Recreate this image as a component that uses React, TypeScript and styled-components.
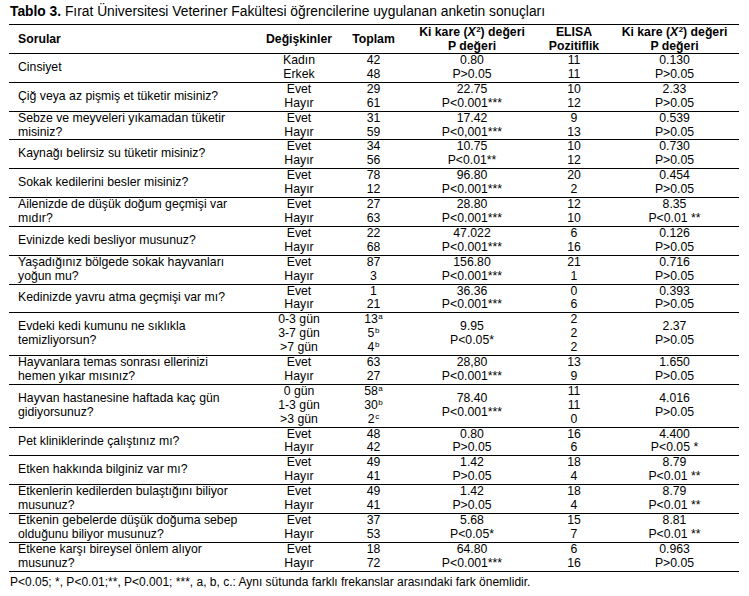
import { FC, ReactNode } from "react";
import styled, { createGlobalStyle } from "styled-components";

interface GroupType {
	q: string;
	vars: string[];
	totals: [string, string?][];
	chi: [string, string];
	elisa: string[];
	chi2: [string, string];
}

const yn = ["Evet", "Hayır"];

const groups: GroupType[] = [
	{ q: "Cinsiyet", vars: ["Kadın", "Erkek"], totals: [["42"], ["48"]], chi: ["0.80", "P>0.05"], elisa: ["11", "11"], chi2: ["0.130", "P>0.05"] },
	{ q: "Çiğ veya az pişmiş et tüketir misiniz?", vars: yn, totals: [["29"], ["61"]], chi: ["22.75", "P<0.001***"], elisa: ["10", "12"], chi2: ["2.33", "P>0.05"] },
	{ q: "Sebze ve meyveleri yıkamadan tüketir misiniz?", vars: yn, totals: [["31"], ["59"]], chi: ["17.42", "P<0,001***"], elisa: ["9", "13"], chi2: ["0.539", "P>0.05"] },
	{ q: "Kaynağı belirsiz su tüketir misiniz?", vars: yn, totals: [["34"], ["56"]], chi: ["10.75", "P<0.01**"], elisa: ["10", "12"], chi2: ["0.730", "P>0.05"] },
	{ q: "Sokak kedilerini besler misiniz?", vars: yn, totals: [["78"], ["12"]], chi: ["96.80", "P<0.001***"], elisa: ["20", "2"], chi2: ["0.454", "P>0.05"] },
	{ q: "Ailenizde de düşük doğum geçmişi var mıdır?", vars: yn, totals: [["27"], ["63"]], chi: ["28.80", "P<0.001***"], elisa: ["12", "10"], chi2: ["8.35", "P<0.01 **"] },
	{ q: "Evinizde kedi besliyor musunuz?", vars: yn, totals: [["22"], ["68"]], chi: ["47.022", "P<0.001***"], elisa: ["6", "16"], chi2: ["0.126", "P>0.05"] },
	{ q: "Yaşadığınız bölgede sokak hayvanları yoğun mu?", vars: yn, totals: [["87"], ["3"]], chi: ["156.80", "P<0.001***"], elisa: ["21", "1"], chi2: ["0.716", "P>0.05"] },
	{ q: "Kedinizde yavru atma geçmişi var mı?", vars: yn, totals: [["1"], ["21"]], chi: ["36.36", "P<0.001***"], elisa: ["0", "6"], chi2: ["0.393", "P>0.05"] },
	{ q: "Evdeki kedi kumunu ne sıklıkla temizliyorsun?", vars: ["0-3 gün", "3-7 gün", ">7 gün"], totals: [["13", "a"], ["5", "b"], ["4", "b"]], chi: ["9.95", "P<0.05*"], elisa: ["2", "2", "2"], chi2: ["2.37", "P>0.05"] },
	{ q: "Hayvanlara temas sonrası ellerinizi hemen yıkar mısınız?", vars: yn, totals: [["63"], ["27"]], chi: ["28,80", "P<0.001***"], elisa: ["13", "9"], chi2: ["1.650", "P>0.05"] },
	{ q: "Hayvan hastanesine haftada kaç gün gidiyorsunuz?", vars: ["0 gün", "1-3 gün", ">3 gün"], totals: [["58", "a"], ["30", "b"], ["2", "c"]], chi: ["78.40", "P<0.001***"], elisa: ["11", "11", "0"], chi2: ["4.016", "P>0.05"] },
	{ q: "Pet kliniklerinde çalıştınız mı?", vars: yn, totals: [["48"], ["42"]], chi: ["0.80", "P>0.05"], elisa: ["16", "6"], chi2: ["4.400", "P<0.05 *"] },
	{ q: "Etken hakkında bilginiz var mı?", vars: yn, totals: [["49"], ["41"]], chi: ["1.42", "P>0.05"], elisa: ["18", "4"], chi2: ["8.79", "P<0.01 **"] },
	{ q: "Etkenlerin kedilerden bulaştığını biliyor musunuz?", vars: yn, totals: [["49"], ["41"]], chi: ["1.42", "P>0.05"], elisa: ["18", "4"], chi2: ["8.79", "P<0.01 **"] },
	{ q: "Etkenin gebelerde düşük doğuma sebep olduğunu biliyor musunuz?", vars: yn, totals: [["37"], ["53"]], chi: ["5.68", "P<0.05*"], elisa: ["15", "7"], chi2: ["8.81", "P<0.01 **"] },
	{ q: "Etkene karşı bireysel önlem alıyor musunuz?", vars: yn, totals: [["18"], ["72"]], chi: ["64.80", "P<0.001***"], elisa: ["6", "16"], chi2: ["0.963", "P>0.05"] },
];

const ChiHead: FC = () => (
	<>
		Ki kare (<i>X</i>
		<Sup>2</Sup>) değeri
	</>
);

export default function App() {
	return (
		<>
			<GlobalStyle />
			<Page>
				<Title>
					<b>Tablo 3.</b> Fırat Üniversitesi Veteriner Fakültesi öğrencilerine uygulanan anketin sonuçları
				</Title>
				<Table>
					<HeadRow>
						<Cell $left>Sorular</Cell>
						<Cell>Değişkinler</Cell>
						<Cell>Toplam</Cell>
						<Cell>
							<Line>
								<ChiHead />
							</Line>
							<Line>P değeri</Line>
						</Cell>
						<Cell>
							<Line>ELISA</Line>
							<Line>Pozitiflik</Line>
						</Cell>
						<Cell>
							<Line>
								<ChiHead />
							</Line>
							<Line>P değeri</Line>
						</Cell>
					</HeadRow>
					{groups.map((g) => (
						<Row key={g.q}>
							<Cell $left>{g.q}</Cell>
							<Lines items={g.vars} />
							<Cell>
								{g.totals.map(([n, s], i) => (
									<Line key={i}>
										{n}
										{s && <Sup>{s}</Sup>}
									</Line>
								))}
							</Cell>
							<Lines items={g.chi} />
							<Lines items={g.elisa} />
							<Lines items={g.chi2} />
						</Row>
					))}
				</Table>
				<Note>
					P&lt;0.05; *, P&lt;0.01;**, P&lt;0.001; ***, a, b, c.: Aynı sütunda farklı frekanslar arasındaki fark önemlidir.
				</Note>
			</Page>
		</>
	);
}

const Lines: FC<{ items: ReactNode[] }> = ({ items }) => (
	<Cell>
		{items.map((t, i) => (
			<Line key={i}>{t}</Line>
		))}
	</Cell>
);

//style_components
const GlobalStyle = createGlobalStyle`
	body {
		margin: 0;
		background: #fff;
		color: #000;
		font-family: "Liberation Sans", Arial, sans-serif;
	}
`;

const Page = styled.div`
	padding: 4px 10px 0 9px;
	width: 730px;
`;

const Title = styled.div`
	font-size: 13.8px;
	line-height: 16px;
	padding-left: 1px;
	margin-bottom: 4px;
	white-space: nowrap;
`;

const Table = styled.div`
	border-top: 1px solid #000;
	font-size: 12.25px;
`;

const Row = styled.div`
	display: grid;
	grid-template-columns: 248px 84px 65px 132px 72px 129px;
	align-items: center;
	border-bottom: 1px solid #000;
	line-height: 13.9px;
`;

const HeadRow = styled(Row)`
	font-weight: bold;
	line-height: 14px;
`;

const Cell = styled.div<{ $left?: boolean }>`
	display: flex;
	flex-direction: column;
	align-items: ${(p) => (p.$left ? "flex-start" : "center")};
	padding: ${(p) => (p.$left ? "0 9px" : "0")};
	white-space: ${(p) => (p.$left ? "normal" : "nowrap")};
`;

const Line = styled.div`
	text-align: center;
`;

const Sup = styled.sup`
	font-size: 8px;
	line-height: 0;
	vertical-align: 4px;
	margin-left: 0.5px;
`;

const Note = styled.div`
	font-size: 12px;
	line-height: 14px;
	padding: 3px 0 0 1px;
`;
